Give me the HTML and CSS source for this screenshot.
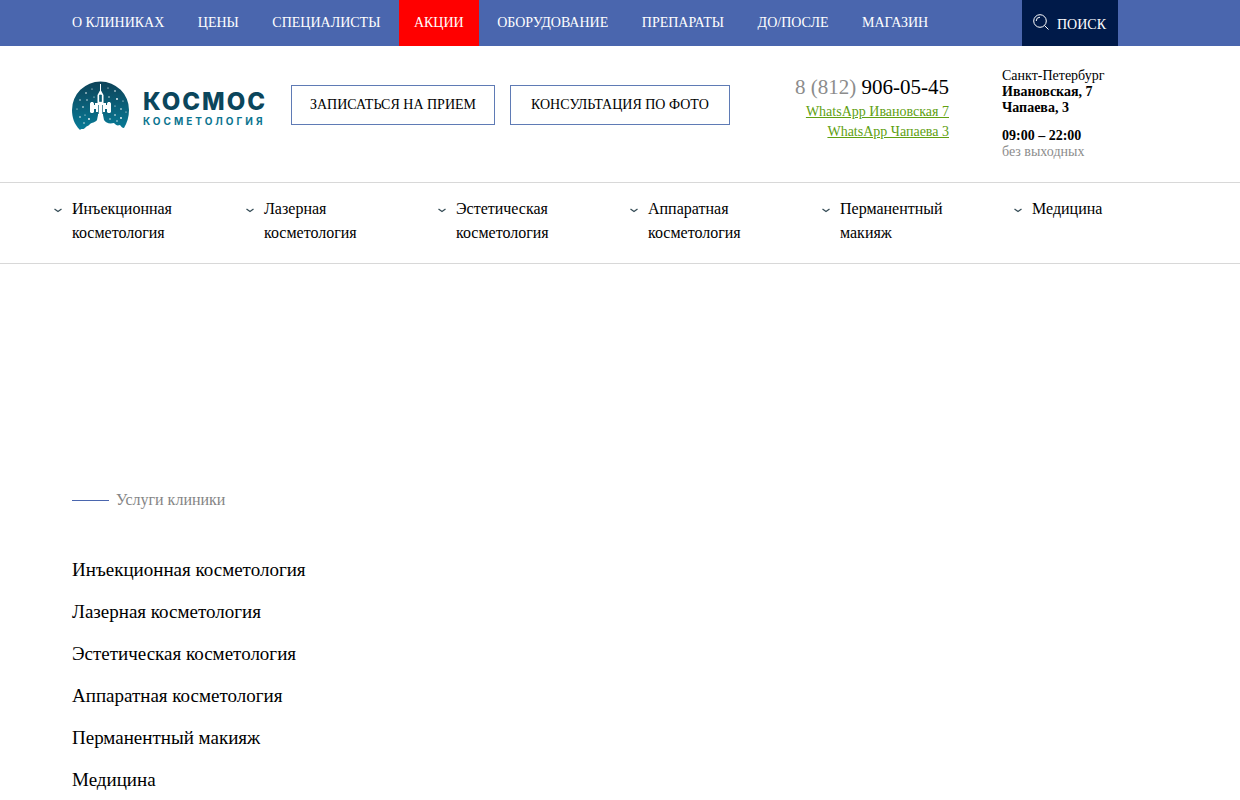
FILE: index.html
```html
<!DOCTYPE html>
<html lang="ru">
<head>
<meta charset="utf-8">
<meta name="viewport" content="width=device-width, initial-scale=1">
<title>Космос косметология</title>
<link rel="stylesheet" href="styles.css">
</head>
<body>
<div class="topbar">
  <nav class="topnav" aria-label="Основное меню">
    <a href="#">О КЛИНИКАХ</a>
    <a href="#">ЦЕНЫ</a>
    <a href="#">СПЕЦИАЛИСТЫ</a>
    <a href="#" class="hot">АКЦИИ</a>
    <a href="#">ОБОРУДОВАНИЕ</a>
    <a href="#">ПРЕПАРАТЫ</a>
    <a href="#">ДО/ПОСЛЕ</a>
    <a href="#">МАГАЗИН</a>
  </nav>
  <button class="search" type="button">
    <svg class="search-icon" viewBox="0 0 16 16" aria-hidden="true"><circle cx="7" cy="7" r="6.3"/><path d="M11.5 11.5L15.5 15.5M3.2 7A3.8 3.8 0 0 1 7 3.2"/></svg>
    <span>ПОИСК</span>
  </button>
</div>
<header class="header">
  <a class="logo" href="#">
    <svg class="emblem" viewBox="0 0 58 50" aria-hidden="true">
      <defs><linearGradient id="sky" x1="0" y1="0" x2="0" y2="1"><stop offset="0" stop-color="#0d4258"/><stop offset="1" stop-color="#087c98"/></linearGradient></defs>
      <path fill="url(#sky)" d="M8 49C2 43 0 36 0 29A28.5 28.5 0 0 1 57 29C57 36 55 42 52 47C50 47 49 45 48 44C45 45 44 44 42 42C37 43 34 42 32 39L31 34H26L25 39C23 42 20 41 18 43C17 45 14 45 13 47C11 49 9 47 8 49Z"/>
      <g fill="#fff">
        <path d="M28 3H29V10H28ZM25.500 14L28 9.500H29L31.500 14V22H34V24H35V22.500L36 21H38L39 22.500V31L38 32H36L35 31V28H33V31H31V39H26V31H24V28H22V31L21 32H19L18 31V22.500L19 21H21L22 22.500V24H23V22H25.500Z"/>
        <circle cx="14" cy="12" r=".8"/><circle cx="20" cy="8" r=".6"/><circle cx="8" cy="19" r=".7"/><circle cx="15" cy="19" r=".7"/><circle cx="5" cy="28" r=".6"/><circle cx="11" cy="26" r=".8"/><circle cx="8" cy="36" r=".8"/><circle cx="13" cy="34" r=".6"/><circle cx="17" cy="38" r=".9"/><circle cx="12" cy="42" r=".7"/><circle cx="22" cy="16" r=".6"/>
        <circle cx="36" cy="7" r=".6"/><circle cx="43" cy="10" r=".8"/><circle cx="37" cy="16" r=".7"/><circle cx="45" cy="18" r=".9"/><circle cx="51" cy="20" r=".6"/><circle cx="43" cy="25" r=".6"/><circle cx="49" cy="28" r=".8"/><circle cx="54" cy="31" r=".6"/><circle cx="43" cy="34" r=".8"/><circle cx="49" cy="37" r=".9"/><circle cx="38" cy="38" r=".7"/><circle cx="45" cy="40" r=".7"/>
      </g>
      <path d="M27.500 14V20.500H29.500V14ZM26.500 24V33M30.500 24V33" fill="#0b5d76" stroke="#0b5d76" stroke-width=".7"/>
    </svg>
    <span class="wordmark"><span class="brand">КОСМОС</span><span class="tagline">КОСМЕТОЛОГИЯ</span></span>
  </a>
  <div class="actions">
    <button type="button">ЗАПИСАТЬСЯ НА ПРИЕМ</button>
    <button type="button">КОНСУЛЬТАЦИЯ ПО ФОТО</button>
  </div>
  <div class="contacts">
    <a class="phone" href="tel:88129060545"><span class="muted">8 (812)</span> 906-05-45</a>
    <a class="whatsapp" href="#">WhatsApp Ивановская 7</a>
    <a class="whatsapp" href="#">WhatsApp Чапаева 3</a>
  </div>
  <address class="address">
    <p>Санкт-Петербург<br><b>Ивановская, 7<br>Чапаева, 3</b></p>
    <p><b>09:00 – 22:00</b><br><span class="muted">без выходных</span></p>
  </address>
</header>
<nav class="services-nav" aria-label="Услуги">
  <a href="#"><svg class="chevron" viewBox="0 0 8 5" aria-hidden="true"><path d="M.5 1L4 3.500L7.500 1"/></svg><span>Инъекционная косметология</span></a>
  <a href="#"><svg class="chevron" viewBox="0 0 8 5" aria-hidden="true"><path d="M.5 1L4 3.500L7.500 1"/></svg><span>Лазерная косметология</span></a>
  <a href="#"><svg class="chevron" viewBox="0 0 8 5" aria-hidden="true"><path d="M.5 1L4 3.500L7.500 1"/></svg><span>Эстетическая косметология</span></a>
  <a href="#"><svg class="chevron" viewBox="0 0 8 5" aria-hidden="true"><path d="M.5 1L4 3.500L7.500 1"/></svg><span>Аппаратная косметология</span></a>
  <a href="#"><svg class="chevron" viewBox="0 0 8 5" aria-hidden="true"><path d="M.5 1L4 3.500L7.500 1"/></svg><span>Перманентный макияж</span></a>
  <a href="#"><svg class="chevron" viewBox="0 0 8 5" aria-hidden="true"><path d="M.5 1L4 3.500L7.500 1"/></svg><span>Медицина</span></a>
</nav>
<main class="content">
  <h2 class="section-title">Услуги клиники</h2>
  <ul class="services">
    <li><a href="#">Инъекционная косметология</a></li>
    <li><a href="#">Лазерная косметология</a></li>
    <li><a href="#">Эстетическая косметология</a></li>
    <li><a href="#">Аппаратная косметология</a></li>
    <li><a href="#">Перманентный макияж</a></li>
    <li><a href="#">Медицина</a></li>
  </ul>
</main>
</body>
</html>
```
FILE: styles.css
```css
* { box-sizing: border-box; }
body {
  margin: 0;
  background: #fff;
  color: #000;
  font: 14px/16px "Liberation Serif", serif;
}
a { color: inherit; text-decoration: none; }
button { font: inherit; cursor: pointer; }
.muted { color: #8c8c8c; }

.topbar {
  display: flex;
  justify-content: space-between;
  padding: 0 122px 0 57px;
  background: #4a66ae;
  color: #fff;
}
.topnav { white-space: nowrap; }
.topnav a { display: inline-block; padding: 0 15px; line-height: 46px; }
.topnav .hot { background: #f00; }
.search {
  display: flex;
  align-items: center;
  gap: 8px;
  padding: 3px 12px 0 11px;
  border: 0;
  background: #001a49;
  color: #fff;
}
.search-icon {
  width: 16px;
  height: 16px;
  margin-bottom: 6px;
  fill: none;
  stroke: #fff;
  stroke-width: 1;
}

.header {
  display: flex;
  align-items: flex-start;
  padding: 22px 122px 22px 72px;
}
.logo { display: flex; gap: 13px; width: 219px; padding-top: 13px; }
.emblem { width: 58px; height: 50px; }
.wordmark {
  display: flex;
  flex-direction: column;
  padding-top: 9px;
  font-family: Inter, "Open Sans", sans-serif;
  white-space: nowrap;
}
.brand { color: #0b465c; font-size: 24px; line-height: 24px; font-weight: 800; letter-spacing: 2px; }
.tagline { color: #0c7590; font-size: 10px; line-height: 14px; font-weight: 700; letter-spacing: 3px; }

.actions { display: flex; gap: 15px; padding-top: 17px; }
.actions button {
  height: 40px;
  padding: 0 20px;
  border: 1px solid #5f7bb5;
  background: #fff;
  color: #000;
  white-space: nowrap;
}
.actions button:first-child { padding: 0 18px; }

.contacts {
  display: flex;
  flex-direction: column;
  align-items: flex-end;
  margin-left: auto;
  padding-top: 5px;
  line-height: 20px;
}
.phone { font-size: 21px; line-height: 28px; margin-bottom: 1px; }
.whatsapp { color: #60a010; text-decoration: underline; }

.address { width: 116px; margin-left: 53px; font-style: normal; }
.address p { margin: 0 0 12px; }
.address p:last-child { margin: 0; }

.services-nav {
  display: grid;
  grid-template-columns: repeat(6, 1fr);
  padding: 14px 34px 18px 54px;
  border: solid #d8d8d8;
  border-width: 1px 0;
  font-size: 16px;
  line-height: 24px;
}
.services-nav a { display: flex; align-items: flex-start; gap: 10px; }
.services-nav span { max-width: 130px; }
.chevron {
  flex: none;
  width: 8px;
  height: 5px;
  margin-top: 11px;
  fill: none;
  stroke: #344b55;
  stroke-width: 1.3;
}

.content { padding: 224px 72px 0; }
.section-title {
  display: flex;
  align-items: center;
  gap: 7px;
  margin: 0;
  color: #858585;
  font-size: 16px;
  line-height: 24px;
  font-weight: 400;
}
.section-title::before { content: ""; width: 37px; height: 1px; background: #4a66ae; }
.services { margin: 46px 0 0; padding: 0; list-style: none; font-size: 19px; line-height: 24px; }
.services li + li { margin-top: 18px; }
```
